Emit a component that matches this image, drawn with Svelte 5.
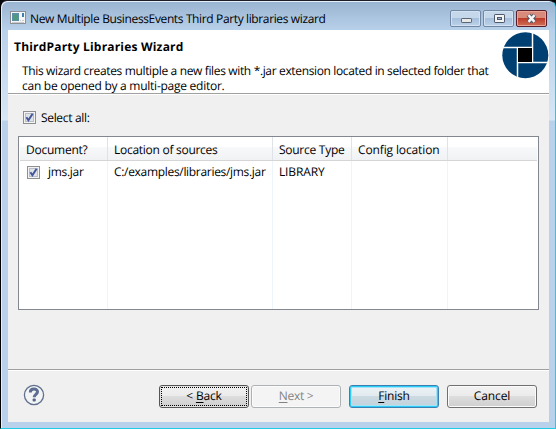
<script>
  const columns = [
    { label: 'Document?', w: 61, col: 89 },
    { label: 'Location of sources', w: 103, col: 165 },
    { label: 'Source Type', w: 65, col: 79 },
    { label: 'Config location', w: 81, col: 96 },
  ];
  const buttons = [
    { pre: '< ', key: 'B', post: 'ack', w: 35, kind: 'focus', gap: 0 },
    { pre: '', key: 'N', post: 'ext >', w: 34, kind: 'disabled', gap: 2 },
    { pre: '', key: 'F', post: 'inish', w: 31, kind: 'primary', gap: 8 },
    { pre: 'Cancel', key: '', post: '', w: 36, kind: '', gap: 8 },
  ];

  // Tracks a label so that it fills the given width.
  function fit(node, width) {
    const n = node.textContent.length;
    const natural = node.getBoundingClientRect().width;
    const spacing = (width + 0.5 - natural) / n;
    node.style.letterSpacing = spacing + 'px';
  }
</script>

{#snippet check()}
  <svg class="check" width="13" height="13" viewBox="0 0 13 13">
    <rect x=".5" y=".5" width="12" height="12" fill="#f4f4f4" stroke="#8e8f8f" />
    <rect x="2.5" y="2.5" width="8" height="8" fill="#dfe3e8" stroke="#b8bdc5" />
    <path d="M3.4 6.2L5.4 9.2L9.6 2.8" fill="none" stroke="#41569b" stroke-width="2" />
  </svg>
{/snippet}

<div class="window">
  <header class="titlebar">
    <svg width="16" height="14" viewBox="0 0 16 14">
      <rect x=".5" y=".5" width="15" height="12" fill="#f5f5f5" stroke="#8c9096" />
      <rect x="2" y="2" width="7" height="8" fill="#5b8fa8" />
      <rect x="3" y="4" width="5" height="5" fill="#4c9c7c" />
      <rect x="12" y="2" width="2" height="4" fill="#3e7eb0" />
      <path d="M10 9.5h1M12 9.5h2M2 11.5h12" stroke="#c9cccf" />
    </svg>
    <span class="t title" use:fit={295}>New Multiple BusinessEvents Third Party libraries wizard</span>
    <div class="controls">
      <div class="ctl">
        <svg width="28" height="15" viewBox="0 0 28 15"><rect x="9.5" y="7.5" width="10" height="4" rx=".6" fill="#e8e8e8" stroke="#5d6575" /></svg>
      </div>
      <div class="ctl">
        <svg width="28" height="15" viewBox="0 0 28 15"><rect x="9.5" y="3.5" width="10" height="8" rx=".6" fill="#f4f4f4" stroke="#50586b" /><rect x="12.5" y="6.5" width="4" height="2" fill="#9bb7d7" stroke="#50586b" /></svg>
      </div>
      <div class="ctl close">
        <svg width="29" height="15" viewBox="0 0 29 15"><path d="M11.3 4L17.7 11M17.7 4L11.3 11" stroke="#545464" stroke-width="4.6" /><path d="M11.5 4.2L17.5 10.8M17.5 4.2L11.5 10.8" stroke="#f6f6f6" stroke-width="2.5" /></svg>
      </div>
    </div>
  </header>

  <main class="client">
    <section class="banner">
      <div class="copy">
        <div class="heading"><span class="t" use:fit={169}>ThirdParty Libraries Wizard</span></div>
        <div class="desc">
          <div><span class="t" use:fit={466}>This wizard creates multiple a new files with *.jar extension located in selected folder that</span></div>
          <div><span class="t" use:fit={202}>can be opened by a multi-page editor.</span></div>
        </div>
      </div>
      <svg class="logo" width="47" height="47" viewBox="0 0 47 47">
        <circle cx="23.3" cy="23.3" r="23" fill="#003f72" />
        <path d="M30.5 0V30.5M16 30.5H47M15.5 16V47M0 15.5H31" stroke="#fff" stroke-width="1.5" />
        <rect x="16" y="16" width="14" height="14" fill="#000" />
      </svg>
    </section>

    <section class="body">
      <div class="selectall">{@render check()}<span class="t" use:fit={48}>Select all:</span></div>
      <div class="table">
        <div class="tr head">
          {#each columns as c}
            <div class="cell" style:width="{c.col}px"><span class="t" use:fit={c.w}>{c.label}</span></div>
          {/each}
          <div class="cell rest"></div>
        </div>
        <div class="tr row">
          <div class="cell first" style:width="{columns[0].col}px">{@render check()}<span class="t" use:fit={35}>jms.jar</span></div>
          <div class="cell" style:width="{columns[1].col}px"><span class="t" use:fit={151}>C:/examples/libraries/jms.jar</span></div>
          <div class="cell" style:width="{columns[2].col}px"><span class="t" use:fit={45}>LIBRARY</span></div>
          <div class="cell" style:width="{columns[3].col}px"></div>
        </div>
      </div>
    </section>

    <footer class="footer">
      <svg class="help" width="22" height="22" viewBox="0 0 22 22">
        <circle cx="11" cy="11" r="9.6" fill="#f3f4f6" stroke="#5f6f8d" stroke-width="1.3" />
        <path d="M7.3 8.4C7.3 4 14.6 4.1 14.5 7.8C14.5 10.3 11.2 10.4 11.2 13.2" fill="none" stroke="#5c6e92" stroke-width="3" />
        <rect x="9.6" y="14.4" width="3.2" height="3" rx="1" fill="#566788" />
      </svg>
      <div class="buttons">
        {#each buttons as b}
          <button class="btn {b.kind}" style:margin-left="{b.gap}px"><span class="t" use:fit={b.w}>{b.pre}<u>{b.key}</u>{b.post}</span></button>
        {/each}
      </div>
    </footer>
  </main>
</div>

<style>
  :global(body) { margin: 0; background: #05090c; overflow: hidden; }
  .window {
    box-sizing: border-box; width: 556px; height: 429px; padding: 0 6px 6px;
    border: 1px solid #22cbe6; border-left: 1px solid #000; border-top-color: #1e1e28;
    border-radius: 7px 7px 0 0; display: flex; flex-direction: column;
    background: linear-gradient(#99b4d1 0, #b9d1ea 30px, #d8e6f5 119px, #b9d1ea 120px);
    box-shadow: inset 1px 1px 0 #e4effa;
    font: 12px/16px "Open Sans", "Noto Sans", sans-serif; color: #000;
  }
  .t { white-space: pre; text-rendering: geometricPrecision; }
  svg { display: block; flex: none; }
  .titlebar { height: 29px; flex: none; display: flex; padding-left: 3px; }
  .titlebar > svg { margin-top: 10px; }
  .title { margin: 10px 0 0 4px; }
  .controls { display: flex; gap: 2px; margin: 9px 2px 0 auto; height: 17px; }
  .ctl {
    box-sizing: border-box; width: 31px; height: 17px; border: 1px solid #7187a3; border-radius: 2px;
    box-shadow: inset 0 0 0 1px #d3e2f2; display: flex; justify-content: center;
    background: linear-gradient(#c5d7ea 50%, #a6bfdc 50%, #bdd3ea);
  }
  .close { border-color: #5a1e2a; box-shadow: inset 0 0 0 1px #e8a596; background: linear-gradient(#d98b7b 50%, #bd3c28 50%, #cf7059); }
  .client { margin-left: 1px; width: 541px; height: 392px; background: #f0f0f0; display: flex; flex-direction: column; }
  .banner {
    box-sizing: border-box; height: 65px; flex: none; display: flex; justify-content: space-between;
    background: #fff; box-shadow: inset 0 -1px #fff, inset 0 -2px #a0a0a0;
  }
  .copy { padding: 9px 0 0 6px; }
  .heading { font-weight: 700; }
  .desc { padding: 8px 0 0 8px; line-height: 15px; }
  .logo { margin: 2px 0 0; }
  .body { box-sizing: border-box; height: 274px; flex: none; padding: 16px 10px 0; }
  .selectall { display: flex; padding-left: 5px; height: 25px; }
  .selectall .t { margin: -1px 0 0 5px; }
  .table {
    box-sizing: border-box; width: 521px; height: 174px; border: 1px solid #828790;
    background: #fff; display: flex; flex-direction: column;
  }
  .tr { display: flex; }
  .cell { box-sizing: border-box; flex: none; padding-left: 6px; border-right: 1px solid #ecf4fc; }
  .cell:first-child { padding-left: 7px; }
  .head { height: 24px; flex: none; margin: 0 1px; border-bottom: 1px solid #d5d5d5; box-sizing: border-box; background: linear-gradient(#fff 10px, #f7f8fa 10px, #f1f2f4); }
  .head .cell { padding-top: 5px; border-right-color: #dfe2e6; position: relative; left: -1px; }
  .head .rest { border: 0; }
  .row { flex: 1; }
  .row .cell { padding-top: 3px; }
  .row .first { display: flex; padding-left: 8px; }
  .first :global(.check) { margin-top: 2px; }
  .first .t { margin-left: 8px; }
  .footer { flex: 1; display: flex; justify-content: space-between; padding: 0 12px 0 15px; border-top: 1px solid #a0a0a0; box-shadow: inset 0 1px #fff; }
  .help { margin-top: 14px; }
  .buttons { display: flex; margin-top: 15px; }
  .btn {
    box-sizing: border-box; width: 90px; height: 23px; padding: 0 0 1px; border: 1px solid #707070; border-radius: 3px;
    font: inherit; color: #000; box-shadow: inset 0 0 0 1px #fbfbfb;
    background: linear-gradient(#f2f2f2 0, #ebebeb 48%, #dddddd 50%, #cfcfcf);
    display: flex; align-items: center; justify-content: center; position: relative;
  }
  .focus { box-shadow: inset 0 0 0 1px #e2e2e2; border-color: #555; }
  .focus::after { content: ''; position: absolute; inset: 1px; border: 1px dotted #000; }
  .disabled { border-color: #adb2b5; background: #f4f4f4; color: #838383; }
  .primary { border-color: #3c7fb1; box-shadow: inset 0 0 0 1px #2bcdf8, inset 0 0 0 2px #a5e4f7; background: linear-gradient(#eef3f6 0, #e1eaef 48%, #ccdae1 50%, #c2d2dc); }
  u { text-underline-offset: 2px; text-decoration-thickness: 1px; }
</style>
